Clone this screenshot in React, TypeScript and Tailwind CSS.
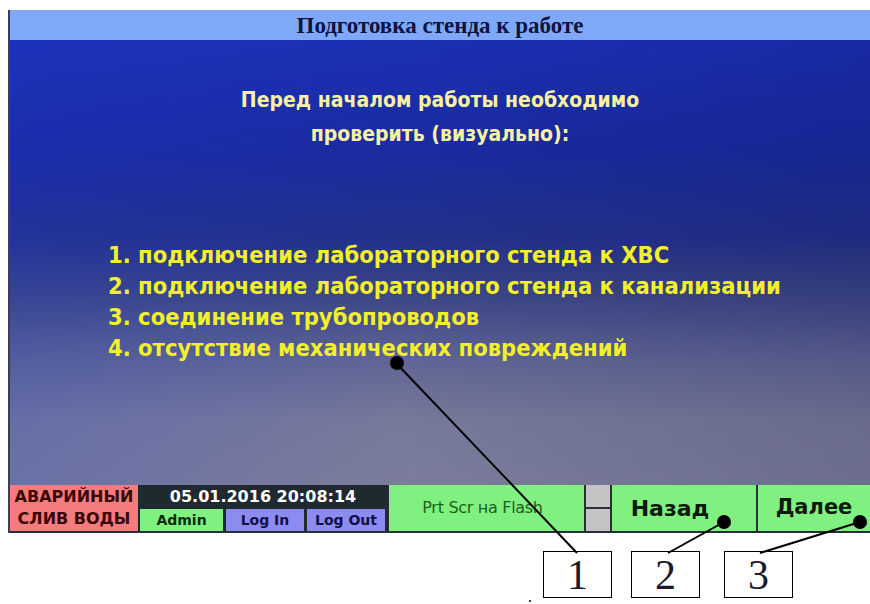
const CHECKS = [
  "1. подключение лабораторного стенда к ХВС",
  "2. подключение лабораторного стенда к канализации",
  "3. соединение трубопроводов",
  "4. отсутствие механических повреждений",
];

const sans = "font-['DejaVu_Sans','Liberation_Sans',sans-serif]";

// выноски с номерами поверх экрана
function Callouts() {
  return (
    <svg
      className="pointer-events-none absolute inset-0"
      width={870}
      height={604}
      viewBox="0 0 870 604"
    >
      <g stroke="#000" strokeWidth={2} fill="none">
        <line x1={397} y1={364} x2={577} y2={553} />
        <line x1={724} y1={522} x2={668} y2={553} />
        <line x1={860} y1={522} x2={760} y2={553} />
      </g>
      <g fill="#000">
        <circle cx={397} cy={363} r={7} />
        <circle cx={724} cy={522} r={7} />
        <circle cx={860} cy={522} r={7} />
        <circle cx={530} cy={601} r={1} />
      </g>
    </svg>
  );
}

function NumberBox({ n, className }: { n: number; className: string }) {
  return (
    <div
      className={`flex h-[47px] w-[69px] items-center justify-center border border-black bg-white font-['Liberation_Serif',serif] text-[42px] leading-none text-[#1a1a2a] ${className}`}
    >
      {n}
    </div>
  );
}

export default function App() {
  return (
    <div className="relative h-[604px] w-[870px] overflow-hidden bg-white">
      <div className="ml-[8px] mt-[10px] w-[862px] border-l-2 border-[#3a3f55]">
        {/* заголовок окна */}
        <div className="flex h-[30px] items-center justify-center bg-[#80a8f8]">
          <span className="font-['Liberation_Serif',serif] text-[23px] font-bold leading-none text-[#0c1440] [font-stretch:condensed]">
            Подготовка стенда к работе
          </span>
        </div>

        {/* основная область */}
        <div className="h-[445px] bg-[linear-gradient(to_right,rgba(30,60,220,0.18),rgba(0,0,0,0)_45%,rgba(0,0,40,0.12)),linear-gradient(to_bottom,#1b30b4_0%,#1a2ba0_25%,#24318a_45%,#3e4787_58%,#5f6594_72%,#777a9b_86%,#7b7d9b_100%)]">
          <div
            className={`${sans} flex flex-col items-center pt-[43px] text-[21px] font-bold leading-[34px] text-[#f6f2a2] [font-stretch:condensed]`}
          >
            <span>Перед началом работы необходимо</span>
            <span>проверить (визуально):</span>
          </div>
          <ul
            className={`${sans} mt-[89px] pl-[98px] text-[23.5px] font-bold leading-[31px] text-[#f2f02a] [font-stretch:condensed]`}
          >
            {CHECKS.map((c) => (
              <li key={c}>{c}</li>
            ))}
          </ul>
        </div>

        {/* нижняя панель */}
        <div className={`${sans} flex h-[48px] border-b-2 border-[#2a2e38] bg-[#2a2e38]`}>
          <div className="flex w-[128px] flex-col items-center justify-center bg-[#f47c7c] text-[16px] font-bold leading-[22px] text-[#3a0505]">
            <span>АВАРИЙНЫЙ</span>
            <span>СЛИВ ВОДЫ</span>
          </div>
          <div className="flex w-[250px] flex-col bg-[#1f2a30] px-[2px]">
            <div className="flex h-[24px] items-center justify-center text-[16px] font-bold text-white">
              05.01.2016 20:08:14
            </div>
            <div className="flex h-[22px] gap-[3px] text-[14px] font-bold">
              <div className="flex w-[83px] items-center justify-center bg-[#80f080] text-[#0a2a0a]">
                Admin
              </div>
              <div className="flex w-[78px] items-center justify-center bg-[#8c8cf0] text-[#10104a]">
                Log In
              </div>
              <div className="flex w-[78px] items-center justify-center bg-[#8c8cf0] text-[#10104a]">
                Log Out
              </div>
            </div>
          </div>
          <div className="ml-[1px] flex w-[195px] items-center justify-center bg-[#80f080] pr-[8px] text-[16px] tracking-[-0.3px] text-[#1a621a]">
            Prt Scr на Flash
          </div>
          <div className="flex w-[28px] flex-col border-x-2 border-[#2a2e38] bg-[#c4c4c4]">
            <div className="flex-1" />
            <div className="h-[2px] bg-[#2a2e38]" />
            <div className="flex-1" />
          </div>
          <div className="flex w-[144px] items-center justify-center bg-[#80f080] pr-[28px] text-[22px] font-bold text-[#0c1a0c]">
            Назад
          </div>
          <div className="w-[2px] bg-[#2a2e38]" />
          <div className="flex flex-1 items-center justify-center bg-[#80f080] text-[21px] font-bold text-[#0c1a0c]">
            Далее
          </div>
        </div>
      </div>

      {/* номера выносок */}
      <div className="mt-[18px] flex">
        <NumberBox n={1} className="ml-[543px]" />
        <NumberBox n={2} className="ml-[19px]" />
        <NumberBox n={3} className="ml-[24px]" />
      </div>

      <Callouts />
    </div>
  );
}
